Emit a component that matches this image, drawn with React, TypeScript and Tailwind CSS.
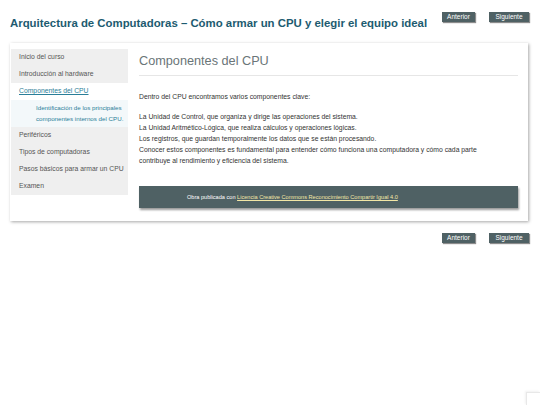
const navItems = [
  "Inicio del curso",
  "Introducción al hardware",
  "Componentes del CPU",
  "Periféricos",
  "Tipos de computadoras",
  "Pasos básicos para armar un CPU",
  "Examen",
];

function NavButtons() {
  return (
    <div className="flex gap-[14px]">
      <button className="w-[33px] h-[10px] bg-[#4f6164] text-white text-[6.5px] leading-[10px] shadow-[1px_1px_1px_rgba(0,0,0,0.45)]">
        Anterior
      </button>
      <button className="w-[40px] h-[10px] bg-[#4f6164] text-white text-[6.5px] leading-[10px] shadow-[1px_1px_1px_rgba(0,0,0,0.45)]">
        Siguiente
      </button>
    </div>
  );
}

export default function App() {
  return (
    <div
      className="w-[540px] h-[405px] bg-white relative"
      style={{ fontFamily: '"Liberation Sans", Arial, sans-serif' }}
    >
      <div className="flex justify-end pt-[12px] pr-[11px]">
        <NavButtons />
      </div>
      <h1 className="ml-[10px] mt-[-6px] text-[11.4px] leading-[14px] font-bold text-[#1d5b70]">
        Arquitectura de Computadoras – Cómo armar un CPU y elegir el equipo ideal
      </h1>

      <div className="ml-[10px] mt-[13px] w-[518px] bg-white shadow-[1px_1px_3px_rgba(0,0,0,0.35)] flex pt-[6px] pl-[1px] pb-[13px]">
        {/* Sidebar */}
        <div className="w-[117px] self-start bg-[#efefef] text-[6.8px] text-[#555]">
          {navItems.map((item) =>
            item === "Componentes del CPU" ? (
              <div key={item}>
                <div className="bg-white h-[17px] pl-[8px] flex items-center">
                  <span className="text-[#2a7e98] underline">{item}</span>
                </div>
                <div className="bg-[#f3f8fa] pl-[25px] pr-[4px] py-[3px] text-[6.2px] leading-[10.5px] text-[#2a7e98]">
                  Identificación de los principales componentes internos del CPU.
                </div>
              </div>
            ) : (
              <div key={item} className="h-[17px] pl-[8px] flex items-center">
                {item}
              </div>
            )
          )}
        </div>

        {/* Content */}
        <div className="ml-[11px] w-[379px]">
          <h2 className="text-[12.7px] leading-[16px] text-[#6a7578] mt-[4px]">
            Componentes del CPU
          </h2>
          <hr className="mt-[6px] border-t border-[#e6e6e6]" />
          <div className="mt-[15px] text-[6.8px] leading-[11px] text-[#333]">
            <p>Dentro del CPU encontramos varios componentes clave:</p>
            <p className="mt-[9px]">
              La Unidad de Control, que organiza y dirige las operaciones del sistema.
              <br />
              La Unidad Aritmético-Lógica, que realiza cálculos y operaciones lógicas.
              <br />
              Los registros, que guardan temporalmente los datos que se están procesando.
              <br />
              Conocer estos componentes es fundamental para entender cómo funciona una
              computadora y cómo cada parte
              <br />
              contribuye al rendimiento y eficiencia del sistema.
            </p>
          </div>
          <div className="mt-[20px] h-[22px] bg-[#4f6164] shadow-[1px_2px_2px_rgba(0,0,0,0.4)] flex items-center pl-[48px] text-[5.6px] text-white">
            <span>
              Obra publicada con{" "}
              <span className="text-[#f3e7a6] underline">
                Licencia Creative Commons Reconocimiento Compartir Igual 4.0
              </span>
            </span>
          </div>
        </div>
      </div>

      <div className="flex justify-end pt-[12px] pr-[11px]">
        <NavButtons />
      </div>

      <div className="absolute right-0 bottom-0 w-[14px] h-[13px] border-l border-t border-[#e8e8e8] shadow-[-1px_-1px_2px_rgba(0,0,0,0.06)]" />
    </div>
  );
}
